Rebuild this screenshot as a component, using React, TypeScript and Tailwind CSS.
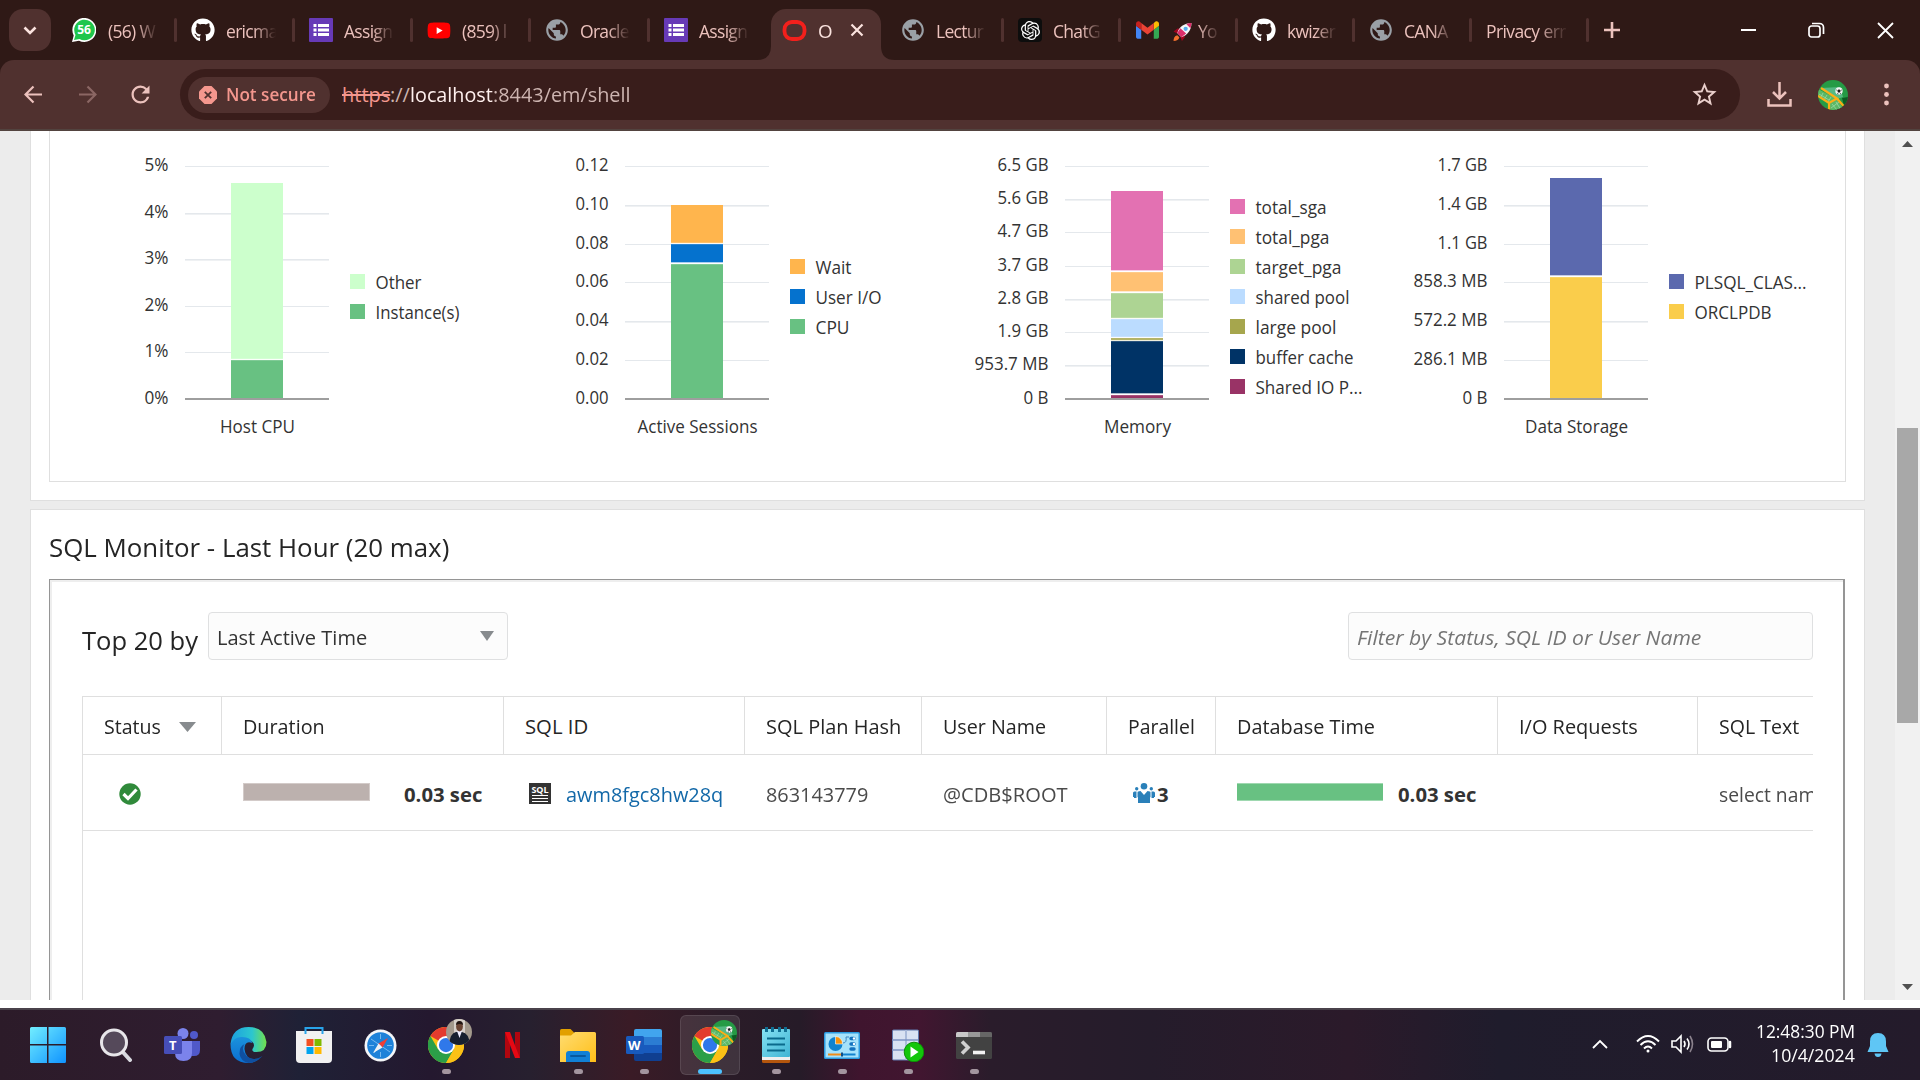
import React, { useLayoutEffect, useRef, useState } from "react";
import { FaGithub, FaYoutube } from "react-icons/fa";
import { SiOpenai } from "react-icons/si";
import { MdPublic, MdStarBorder, MdRefresh } from "react-icons/md";

/** Text condensed horizontally so the run fills a given width. */
function T({ w, className = "", struck = false, children }: { w: number; className?: string; struck?: boolean; children: string }) {
  const ref = useRef<HTMLSpanElement>(null);
  const [sx, setSx] = useState(1);
  useLayoutEffect(() => {
    if (ref.current) setSx(w / ref.current.offsetWidth);
  }, []);
  return (
    <span className={"inline-block shrink-0 whitespace-pre " + className} style={{ width: w }}>
      <span
        ref={ref}
        className={struck ? "inline-block origin-left line-through decoration-2" : "inline-block origin-left"}
        style={{ transform: "scaleX(" + sx + ")" }}
      >
        {children}
      </span>
    </span>
  );
}

/* ---------- browser chrome ---------- */

function FormsIcon() {
  return (
    <svg width="24" height="24" viewBox="0 0 24 24">
      <rect width="24" height="24" rx="1" fill="#673ab7" />
      <g fill="#fff">
        <rect x="4.500" y="6" width="3" height="3" /><rect x="9" y="6" width="11" height="3" />
        <rect x="4.500" y="10.500" width="3" height="3" /><rect x="9" y="10.500" width="11" height="3" />
        <rect x="4.500" y="15" width="3" height="3" /><rect x="9" y="15" width="11" height="3" />
      </g>
    </svg>
  );
}
function WhatsIcon() {
  return (
    <span className="relative -ml-0.5 flex size-6 items-center justify-center">
      <svg className="absolute inset-0" width="24" height="24" viewBox="0 0 24 24">
        <path d="M0 24 1.700 17.500A12 12 0 1 1 7 22.700z" fill="#fff" />
        <path d="M2 22 3.500 17A10.300 10.300 0 1 1 7.500 21z" fill="#1fc64c" />
      </svg>
      <span className="relative text-[12px] font-bold leading-none text-white">56</span>
    </span>
  );
}
function GmailIcon() {
  return (
    <svg width="23" height="18" viewBox="52 42 88 66">
      <path fill="#4285f4" d="M58 108h14V74L52 59v43c0 3.320 2.690 6 6 6" />
      <path fill="#34a853" d="M120 108h14c3.320 0 6-2.690 6-6V59l-20 15" />
      <path fill="#fbbc04" d="M120 48v26l20-15v-8c0-7.420-8.470-11.650-14.400-7.200" />
      <path fill="#ea4335" d="M72 74V48l24 18 24-18v26L96 92" />
      <path fill="#c5221f" d="M52 51v8l20 15V48l-5.600-4.200c-5.940-4.450-14.400-.22-14.400 7.200" />
    </svg>
  );
}
function Rocket() {
  return (
    <svg width="19" height="20" viewBox="0 0 36 36" className="ml-[3px] shrink-0">
      <path d="M1 17l7.500-5.500 8 1L8 21zM17 35l5.500-7-1-8.500L14 28z" fill="#a0041e" />
      <path d="M8 20C11 9 21 1 35 1c0 14-8 23-19 27z" fill="#f2f6f8" />
      <path d="M8 20l6-9 11 10-9 7zM25 3c3-1 7-2 10-2 0 3-1 7-2 10z" fill="#dd2e6b" />
      <circle cx="24" cy="12" r="4" fill="#55acee" />
      <path d="M1 35c0-6 2-10 7-11l4 4c-1 5-5 7-11 7z" fill="#f4702c" />
    </svg>
  );
}
function ProfilePitch({ size }: { size: number }) {
  return (
    <svg width={size} height={size} viewBox="0 0 30 30">
      <defs><clipPath id={"p" + size}><circle cx="15" cy="15" r="15" /></clipPath></defs>
      <g clipPath={"url(#p" + size + ")"}>
        <rect width="30" height="30" fill="#259b45" />
        <path d="M3 8 22 7 25 17 19 19z" fill="#55b983" />
        <path d="M0 9 19 19 11 23 0 16z M19 19 26 30 12 30 11 23z" fill="#5cb866" />
        <path d="M24 18l6-1v11l-4-2z" fill="#0c5b23" />
        <path d="M1 14l10 6M5 13l-2 4M9 15l-3 5M13 17l-3 5M14 24l5 6M18 22l5 8M13 28l8-6" stroke="#a3dcae" strokeWidth=".7" />
        <path d="M3 8 19 18.500 11 23 0 16M11 23v7M19 18.500l7 8" fill="none" stroke="#fbae17" strokeWidth="2.200" />
        <circle cx="21" cy="11" r="3.700" fill="#f1f4f1" />
        <path d="M21 9.200l1.700 1.300-.7 1.900h-2l-.7-1.900zM17.800 9.500l1 .3-.6 1zM24.300 9.500l-1 .3.500 1.200zM19 14l.8-.9.900 1.400zM23.200 13.800l-.8-.8-.6 1.500z" fill="#1c1c1c" />
      </g>
    </svg>
  );
}

type Tab = { w: number; icon: React.ReactNode; text: string; sep?: boolean };
const globe = <MdPublic size={26} color="#9aa0a6" className="shrink-0" />;
const TABS: Tab[] = [
  { w: 118, icon: <WhatsIcon />, text: "(56) W", sep: true },
  { w: 118, icon: <FaGithub size={24} color="#fff" />, text: "ericma", sep: true },
  { w: 118, icon: <FormsIcon />, text: "Assign", sep: true },
  { w: 118, icon: <FaYoutube size={25} color="#f00" className="rounded bg-[radial-gradient(circle,#fff_30%,transparent_31%)]" />, text: "(859) l", sep: true },
  { w: 119, icon: globe, text: "Oracle", sep: true },
  { w: 118, icon: <FormsIcon />, text: "Assign" },
];
const TABS2: Tab[] = [
  { w: 117, icon: globe, text: "Lectur", sep: true },
  { w: 117, icon: <span className="flex size-6 items-center justify-center rounded bg-[#0d0d0d]"><SiOpenai size={19} color="#fff" /></span>, text: "ChatG", sep: true },
  { w: 117, icon: <GmailIcon />, text: "Yo", sep: true },
  { w: 117, icon: <FaGithub size={24} color="#fff" />, text: "kwizer", sep: true },
  { w: 117, icon: globe, text: "CANA", sep: true },
];

function TabItem({ t }: { t: Tab }) {
  return (
    <div className="flex h-[60px] shrink-0 items-center pl-4" style={{ width: t.w }}>
      <span className="flex size-6 shrink-0 items-center justify-center">{t.icon}</span>
      <span className="ml-[11px] flex h-8 w-[51px] items-center gap-1.5 overflow-hidden whitespace-nowrap pt-[3px] text-[17.500px] tracking-[-0.7px] [mask-image:linear-gradient(90deg,#000_55%,transparent_98%)]">
        {t.text === "Yo" && <Rocket />}
        {t.text}
      </span>
      {t.sep && <span className="-mr-[2px] ml-auto h-6 w-[3px] rounded bg-[#50312f]" />}
    </div>
  );
}

function TabStrip() {
  return (
    <div className="flex h-[60px] w-full shrink-0 items-center bg-[#2f1916] text-[#ecc2bd]">
      <div className="ml-[9px] flex size-[42px] shrink-0 items-center justify-center rounded-[14px] bg-[#50312f]">
        <svg width="14" height="9" viewBox="0 0 14 9"><path d="M1.500 1.500 7 7l5.500-5.500" fill="none" stroke="#fbe3df" strokeWidth="2.600" /></svg>
      </div>
      <div className="ml-[6px] flex shrink-0">
        {TABS.map((t, i) => <TabItem key={i} t={t} />)}
      </div>
      <div className="flex h-[60px] w-[119px] shrink-0 items-end">
        <svg width="14" height="14" className="-ml-[9px] shrink-0"><path d="M0 14Q14 14 14 0V14z" fill="#50312f" /></svg>
        <div className="flex h-[51px] w-[110px] shrink-0 items-center rounded-t-[15px] bg-[#50312f] pb-[9px] pl-[11px]">
          <svg width="25" height="25" viewBox="0 0 25 25"><rect x="2.500" y="4" width="20" height="17" rx="7.500" fill="none" stroke="#f3201c" strokeWidth="3.800" /></svg>
          <T w={15} className="ml-[11px] pt-[3px] text-[17.500px] text-[#fbe3df]">O</T>
          <svg width="14" height="14" className="ml-[17px]"><path d="M1.500 1.500l11 11M12.500 1.500l-11 11" stroke="#fbe3df" strokeWidth="2.200" /></svg>
        </div>
        <svg width="14" height="14" className="shrink-0"><path d="M0 0Q0 14 14 14H0z" fill="#50312f" /></svg>
      </div>
      <div className="flex shrink-0">
        {TABS2.map((t, i) => <TabItem key={i} t={t} />)}
      </div>
      <div className="flex w-[117px] shrink-0 items-center">
        <span className="ml-[16px] w-[84px] overflow-hidden whitespace-nowrap pt-[3px] text-[17.500px] tracking-[-0.6px] [mask-image:linear-gradient(90deg,#000_60%,transparent_98%)]">Privacy err</span>
        <span className="-mr-[2px] ml-auto h-6 w-[3px] rounded bg-[#50312f]" />
      </div>
      <svg width="16" height="16" className="ml-[17px]"><path d="M8 0v16M0 8h16" stroke="#ecc2bd" strokeWidth="2.600" /></svg>
      <div className="ml-auto mr-[26px] flex items-center">
        <span className="h-[2px] w-[15px] bg-white" />
        <svg width="17" height="17" className="ml-[52px]" fill="none" stroke="#fff" strokeWidth="1.700">
          <rect x="1" y="4" width="11" height="11" rx="2.500" /><path d="M4 1.500h7.500a4 4 0 0 1 4 4V12" />
        </svg>
        <svg width="17" height="17" className="ml-[52px]"><path d="M1 1l15 15M16 1L1 16" stroke="#fff" strokeWidth="1.800" /></svg>
      </div>
    </div>
  );
}

function Toolbar() {
  return (
    <div className="shrink-0 bg-[#2f1916]">
      <div className="flex h-[71px] items-center rounded-t-[14px] border-b-2 border-[#52433f] bg-[#50312f]">
        <svg width="19" height="19" className="ml-6" fill="none" stroke="#ecc2bd" strokeWidth="2.200"><path d="M18 9.500H2M9.500 1.500l-8 8 8 8" /></svg>
        <svg width="19" height="19" className="ml-[35px]" fill="none" stroke="#8b6764" strokeWidth="2.200"><path d="M1 9.500h16M9.500 1.500l8 8-8 8" /></svg>
        <MdRefresh size={27} color="#ecc2bd" className="ml-[30px]" />
        <div className="ml-[26px] flex h-[51px] w-[1560px] items-center rounded-full bg-[#391d1b] pl-2">
          <div className="flex h-9 w-[142px] items-center rounded-full bg-[#50312f] pl-[11px]">
            <svg width="18" height="18" viewBox="0 0 18 18"><path d="M5.500 0h7L18 5.500v7L12.500 18h-7L0 12.500v-7z" fill="#f4978e" /><path d="M5.800 5.800l6.400 6.400M12.200 5.800l-6.400 6.400" stroke="#50312f" strokeWidth="1.800" /></svg>
            <T w={90} className="ml-[9px] text-[17.500px] font-semibold text-[#f4978e]">Not secure</T>
          </div>
          <span className="ml-[12px] flex text-[20px]">
            <T w={48} struck className="text-[#f4978e]">https</T>
            <T w={20} className="text-[#cdb4b0]">://</T>
            <T w={83} className="text-[#fff0ee]">localhost</T>
            <T w={138} className="text-[#cdb4b0]">:8443/em/shell</T>
          </span>
          <MdStarBorder size={29} color="#e9cfcb" className="ml-auto mr-[21px]" />
        </div>
        <svg width="25" height="25" className="ml-[27px]" fill="none" stroke="#ecc2bd" strokeWidth="2.500"><path d="M12.500 0v16M6 10l6.500 6.500L19 10M1.500 17v6.500h22V17" /></svg>
        <span className="ml-[26px]"><ProfilePitch size={30} /></span>
        <svg width="5" height="26" className="ml-[36px]" fill="#ecc2bd"><circle cx="2.500" cy="4" r="2.400" /><circle cx="2.500" cy="12.500" r="2.400" /><circle cx="2.500" cy="21" r="2.400" /></svg>
      </div>
    </div>
  );
}

/* ---------- charts ---------- */

type ChartData = {
  title: string; tw: number;
  ticks: [string, number][];
  bars: [number, number, string][];
  legend: [string, number, string][];
  legendTop: number;
};

const CHARTS: ChartData[] = [
  {
    title: "Host CPU", tw: 75,
    ticks: [["5%", 24], ["4%", 24], ["3%", 24], ["2%", 24], ["1%", 24], ["0%", 24]],
    bars: [[52, 228, "#ccffcc"], [229, 267, "#68c182"]],
    legend: [["Other", 46, "#ccffcc"], ["Instance(s)", 84, "#68c182"]], legendTop: 143,
  },
  {
    title: "Active Sessions", tw: 120,
    ticks: [["0.12", 33], ["0.10", 33], ["0.08", 33], ["0.06", 33], ["0.04", 33], ["0.02", 33], ["0.00", 33]],
    bars: [[74, 112, "#ffb54d"], [113, 131, "#0572ce"], [133, 267, "#68c182"]],
    legend: [["Wait", 36, "#ffb54d"], ["User I/O", 66, "#0572ce"], ["CPU", 34, "#68c182"]], legendTop: 128,
  },
  {
    title: "Memory", tw: 67,
    ticks: [["6.5 GB", 51], ["5.6 GB", 51], ["4.7 GB", 51], ["3.7 GB", 51], ["2.8 GB", 51], ["1.9 GB", 51], ["953.7 MB", 74], ["0 B", 25]],
    bars: [[60, 139, "#e371b2"], [141, 160, "#ffc173"], [162, 187, "#add493"], [188, 206, "#bbdcff"], [207, 210, "#a6a64d"], [210, 262, "#003366"], [264, 267, "#993366"]],
    legend: [["total_sga", 71, "#e371b2"], ["total_pga", 74, "#ffc173"], ["target_pga", 86, "#add493"], ["shared pool", 94, "#bbdcff"], ["large pool", 81, "#a6a64d"], ["buffer cache", 98, "#003366"], ["Shared IO P...", 107, "#993366"]], legendTop: 68,
  },
  {
    title: "Data Storage", tw: 103,
    ticks: [["1.7 GB", 50], ["1.4 GB", 50], ["1.1 GB", 50], ["858.3 MB", 74], ["572.2 MB", 74], ["286.1 MB", 74], ["0 B", 25]],
    bars: [[47, 144, "#5b69ae"], [146, 267, "#facd4b"]],
    legend: [["PLSQL_CLAS...", 112, "#5b69ae"], ["ORCLPDB", 77, "#facd4b"]], legendTop: 143,
  },
];

function Chart({ c }: { c: ChartData }) {
  const n = c.ticks.length - 1;
  return (
    <svg width="440" height="350" viewBox="0 0 440 350" className="shrink-0 last:-ml-px" fontSize="17.800" fill="#333">
      {c.ticks.map(([label, w], i) => {
        const y = Math.round(35 + (i * 232.500) / n);
        return (
          <g key={i}>
            {i < n && <rect x="135" y={y} width="144" height={y % 2 ? 1 : 1.600} fill="#e4e8ec" />}
            <text x={118.500 - w} y={y + 5} textLength={w} lengthAdjust="spacingAndGlyphs">{label}</text>
          </g>
        );
      })}
      {c.bars.map(([a, b, f], i) => (
        <rect key={i} x="181" y={a} width="52" height={b - a + (i < c.bars.length - 1 ? 0.400 : 0)} fill={f} />
      ))}
      {c.bars.slice(1).map(([a], i) => <rect key={i} x="181" y={a - 1.200} width="52" height="1.400" fill="#fff" opacity=".8" />)}
      <rect x="135" y="267" width="144" height="2" fill="#9e9e9e" />
      <text x={207.500 - c.tw / 2} y="302" textLength={c.tw} lengthAdjust="spacingAndGlyphs">{c.title}</text>
      {c.legend.map(([label, w, f], i) => (
        <g key={label}>
          <rect x="300" y={c.legendTop + i * 30} width="15" height="15" fill={f} />
          <text x="325.500" y={c.legendTop + 15 + i * 30} textLength={w} lengthAdjust="spacingAndGlyphs">{label}</text>
        </g>
      ))}
    </svg>
  );
}

/* ---------- SQL monitor ---------- */

const COLS: { w: number; label: string; tw: number }[] = [
  { w: 139, label: "Status", tw: 57 },
  { w: 282, label: "Duration", tw: 82 },
  { w: 241, label: "SQL ID", tw: 63 },
  { w: 177, label: "SQL Plan Hash", tw: 135 },
  { w: 185, label: "User Name", tw: 103 },
  { w: 109, label: "Parallel", tw: 67 },
  { w: 282, label: "Database Time", tw: 138 },
  { w: 200, label: "I/O Requests", tw: 119 },
  { w: 260, label: "SQL Text", tw: 80 },
];

function Cell({ i, children, className = "" }: { i: number; children?: React.ReactNode; className?: string }) {
  return <div className={"flex h-full shrink-0 items-center pl-[21px] " + className} style={{ width: COLS[i].w }}>{children}</div>;
}

function SqlTable() {
  return (
    <div className="h-[400px] w-[1731px] overflow-hidden border-l border-t border-[#dfdfdf] text-[20.300px]">
      <div className="flex h-[58px] w-[1900px] border-b border-[#dfdfdf] text-[#252525]">
        {COLS.map((c, i) => (
          <Cell key={c.label} i={i} className={i < 8 ? "border-r border-[#dfdfdf] pt-[2px]" : "pt-[2px]"}>
            <T w={c.tw}>{c.label}</T>
            {i === 0 && <svg width="17" height="10" className="ml-[18px]"><path d="M0 0h17L8.500 10z" fill="#878b8e" /></svg>}
          </Cell>
        ))}
      </div>
      <div className="flex h-[76px] w-[1900px] items-center border-b border-[#dfdfdf] text-[#4a4a4a]">
        <Cell i={0}>
          <svg width="22" height="22" viewBox="0 0 22 22" className="ml-[15px] mt-[3px]"><circle cx="11" cy="11" r="10.700" fill="#308a3b" /><path d="M4.500 11l4.500 4.500 8.500-9" fill="none" stroke="#fff" strokeWidth="3.200" /></svg>
        </Cell>
        <Cell i={1}>
          <span className="-mt-px h-[18px] w-[127px] border border-[#d3cbc9] bg-[#bcb1ae]" />
          <T w={78} className="ml-[34px] mt-[3px] font-bold text-[#333]">0.03 sec</T>
        </Cell>
        <Cell i={2}>
          <span className="ml-1 mt-px flex h-[21px] w-[22px] flex-col items-center gap-[2px] bg-[#333] pt-[3px]">
            <span className="text-[9px] font-bold leading-[7px] text-white">SQL</span>
            <span className="h-px w-4 bg-white" /><span className="h-px w-4 bg-white" /><span className="h-px w-4 bg-white" />
          </span>
          <T w={157} className="ml-[15px] mt-[3px] text-[#1268a8]">awm8fgc8hw28q</T>
        </Cell>
        <Cell i={3}><T w={102} className="mt-[3px]">863143779</T></Cell>
        <Cell i={4}><T w={125} className="mt-[3px]">@CDB$ROOT</T></Cell>
        <Cell i={5}>
          <svg width="22" height="22" viewBox="0 0 22 20" className="ml-[5px]" fill="#2a80b9">
            <circle cx="11" cy="3.300" r="3.300" /><circle cx="3.700" cy="5.800" r="1.700" /><circle cx="18.300" cy="5.800" r="1.700" />
            <path d="M4.500 9.500q0-1.500 3-1.500l3.500 4 3.500-4q3 0 3 1.500v4.500l-.5.500V20h-12v-5.500l-.5-.5z" />
            <path d="M0 14V10q0-1.500 1.500-1.500H3.500V15H1V14zM22 14V10q0-1.500-1.500-1.500H18.500V15h2.500V14z" />
          </svg>
          <T w={12} className="ml-[2px] mt-[3px] font-bold text-[#333]">3</T>
        </Cell>
        <Cell i={6}>
          <span className="-mt-px h-[18px] w-[146px] border-y border-[#9fd8b0] bg-[#68c182]" />
          <T w={78} className="ml-[15px] mt-[3px] font-bold text-[#333]">0.03 sec</T>
        </Cell>
        <Cell i={7} />
        <Cell i={8}><T w={97} className="mt-[3px]">select nam</T></Cell>
      </div>
    </div>
  );
}

function Page() {
  return (
    <div className="flex h-[869px] shrink-0 overflow-hidden bg-[#ececec]">
      <div className="w-[30px] shrink-0" />
      <div className="flex w-[1835px] shrink-0 flex-col">
        <div className="h-[370px] shrink-0 border border-t-0 border-[#dfdfdf] bg-white px-[18px]">
          <div className="flex h-[351px] w-[1797px] overflow-hidden border border-t-0 border-[#dfdfdf]">
            {CHARTS.map((c) => <Chart key={c.title} c={c} />)}
          </div>
        </div>
        <div className="mt-2 h-[491px] shrink-0 overflow-hidden border border-b-0 border-[#dfdfdf] bg-white px-[18px]">
          <div className="flex h-[69px] items-center pt-[5px] text-[26px] text-[#252525]">
            <T w={400}>SQL Monitor - Last Hour (20 max)</T>
          </div>
          <div className="h-[440px] w-[1796px] border-l border-r-2 border-t border-[#959595]">
            <div className="h-full border-l-2 border-t-2 border-[#eee] px-[30px]">
              <div className="flex items-center pt-[30px]">
                <T w={116} className="mt-[8px] text-[26px] text-[#252525]">Top 20 by</T>
                <div className="ml-[10px] flex h-12 w-[300px] items-center justify-between rounded-sm border border-[#dfe0e1] bg-[#fcfcfc] pl-[8px] pr-[13px] text-[20.300px] text-[#333]">
                  <T w={150} className="mt-[2px]">Last Active Time</T>
                  <svg width="14" height="10"><path d="M0 0h14L7 10z" fill="#878b8e" /></svg>
                </div>
                <div className="ml-auto flex h-12 w-[465px] items-center rounded-sm border border-[#dfe0e1] bg-[#fcfcfc] pl-[8px] text-[20.300px] italic text-[#757575]">
                  <T w={344} className="mt-[2px]">Filter by Status, SQL ID or User Name</T>
                </div>
              </div>
              <div className="mt-9"><SqlTable /></div>
            </div>
          </div>
        </div>
      </div>
      <div className="ml-auto flex w-[25px] flex-col items-center bg-[#f1f1f1]">
        <svg width="11" height="6" className="mt-[10px]"><path d="M0 6h11L5.500 0z" fill="#505050" /></svg>
        <div className="mt-[281px] h-[295px] w-[21px] bg-[#a8a8a8]" />
        <svg width="11" height="6" className="mt-[261px]"><path d="M0 0h11L5.500 6z" fill="#505050" /></svg>
      </div>
    </div>
  );
}

/* ---------- taskbar ---------- */

function ChromeLogo() {
  return (
    <svg width="36" height="36" viewBox="0 0 48 48">
      <circle cx="24" cy="24" r="24" fill="#fbc116" />
      <path d="M24 24 3.200 12A24 24 0 0 1 44.800 12H24z" fill="#e33b2e" />
      <path d="M3.200 12A24 24 0 0 0 24 48L34.400 30 24 24 13.600 30z" fill="#2b9f48" />
      <path d="M24 12H44.800A24 24 0 0 1 24 48L34.400 30z" fill="#fbc116" />
      <circle cx="24" cy="24" r="12" fill="#fff" />
      <circle cx="24" cy="24" r="9.500" fill="#2f78ea" />
    </svg>
  );
}
function PersonAvatar() {
  return (
    <svg width="26" height="26" viewBox="0 0 26 26">
      <defs><clipPath id="av"><circle cx="13" cy="13" r="13" /></clipPath></defs>
      <g clipPath="url(#av)">
        <rect width="26" height="26" fill="#a39a8d" /><rect x="8" width="11" height="14" fill="#d6d0c9" />
        <path d="M3 26q1-12 7-13h6q7 1 8 13z" fill="#17202f" />
        <path d="M11 12h5l-2.500 7z" fill="#eef" />
        <ellipse cx="13.500" cy="7.500" rx="3.400" ry="5" fill="#6b4635" /><path d="M10 6q0-4 3.500-4T17 6q-3-2-7 0z" fill="#201512" />
      </g>
    </svg>
  );
}

const APPS: { icon: React.ReactNode; dot?: boolean; active?: boolean; badge?: React.ReactNode }[] = [
  { icon: <svg className="mr-[4px]" width="36" height="36" viewBox="0 0 36 36"><defs><linearGradient id="wn" x1="0" y1="0" x2="1" y2="1"><stop stopColor="#72eeff" /><stop offset="1" stopColor="#0f93ff" /></linearGradient></defs><path d="M1.500 0H17v17H0V1.500Q0 0 1.500 0zM18.500 0h16Q36 0 36 1.500V17H18.500zM0 18.500h17V36H1.500Q0 36 0 34.500zM18.500 18.500H36v16q0 1.500-1.500 1.500h-16z" fill="url(#wn)" /></svg> },
  { icon: <svg width="34" height="34" viewBox="0 0 34 34"><path d="M22 22l9 10" stroke="#d8d8df" strokeWidth="4" strokeLinecap="round" /><circle cx="15" cy="14.500" r="12.500" fill="#55495a" stroke="#e8e6ea" strokeWidth="3" /></svg> },
  { icon: <span className="relative flex size-9"><svg width="36" height="36" viewBox="0 -1 36 36"><circle cx="19" cy="5.500" r="5.500" fill="#7b83eb" /><circle cx="30" cy="7" r="4" fill="#5059c9" /><path d="M26 13h10v9q0 6-6 6h-4z" fill="#5059c9" /><path d="M11 13h17v12q0 8-8.500 8T11 25z" fill="#7b83eb" /><rect y="8" width="18" height="18" rx="1.500" fill="#464eb8" /></svg><span className="absolute left-[5px] top-[10px] text-[13px] font-bold leading-4 text-white">T</span></span> },
  { icon: <svg width="37" height="36" viewBox="0 0 36 36"><defs><linearGradient id="e1" x1="0" x2="1"><stop stopColor="#1c9fe0" /><stop offset=".6" stopColor="#2cc6cf" /><stop offset="1" stopColor="#72e04c" /></linearGradient><linearGradient id="e2" x1="0" x2="0" y1="0" y2="1"><stop stopColor="#1b92dc" /><stop offset="1" stopColor="#0b6fd2" /></linearGradient></defs><path d="M0 17Q2 0 18 0T36 15Q36 25 26 25q-5 0-4-3 3-4 0-7-8-8-22 2z" fill="url(#e1)" /><path d="M0 17q5-8 12-7 8 0 10 6-8-3-8 6 1 12 14 10Q24 36 18 36 0 36 0 17z" fill="url(#e2)" /><path d="M14 17q-4 6 2 12 7 6 16 0Q26 36 18 36q-8-2-9-9 0-8 5-10z" fill="#0f4fa0" /></svg> },
  { icon: <svg width="36" height="36" viewBox="0 0 36 36"><path d="M9.500 6V1h17v5" fill="none" stroke="#28a4ea" strokeWidth="2" /><path d="M0 4h36v28q0 4-4 4H4q-4 0-4-4z" fill="#f1f1f1" /><path d="M9.500 7V4M26.500 7V4" stroke="#28a4ea" strokeWidth="2" /><path d="M10.500 12h7v7h-7z" fill="#f25022" /><path d="M18.500 12h7v7h-7z" fill="#7fba00" /><path d="M10.500 20h7v7h-7z" fill="#00a4ef" /><path d="M18.500 20h7v7h-7z" fill="#ffb900" /></svg> },
  { icon: <svg width="33" height="33" viewBox="0 0 33 33"><circle cx="16.500" cy="16.500" r="16" fill="#f4f6f8" /><circle cx="16.500" cy="16.500" r="13.300" fill="#1d82d9" /><path d="M7 10l19 13M10 24l4-5M16.500 5v5M16.500 23v5M5 16.500h5M23 16.500h5" stroke="#7fc0f3" strokeWidth=".9" /><path d="M24 9l-5.500 9.500-4-4z" fill="#f03e35" /><path d="M9 24l5.500-9.500 4 4z" fill="#eef2f6" /></svg> },
  { icon: <ChromeLogo />, dot: true, badge: <PersonAvatar /> },
  { icon: <svg width="15" height="26" viewBox="0 0 15 26"><path d="M0 0h5v26l-5 .5zM10 0h5v26.500l-5-.5z" fill="#b1060f" /><path d="M0 0h5l10 26.500-5-.5z" fill="#e50914" /></svg> },
  { icon: <svg width="36" height="33" viewBox="0 0 36 33"><path d="M0 1.500Q0 0 1.500 0h9l4 4v5H0z" fill="#e2a000" /><defs><linearGradient id="ex" x1="0" x2="1" y1="0" y2="1"><stop stopColor="#ffdc71" /><stop offset="1" stopColor="#ffbf18" /></linearGradient></defs><path d="M0 6.500h11l4-3.500h19.500Q36 3 36 4.500V33H0z" fill="url(#ex)" /><path d="M6 33v-8q0-3 3-3h18q3 0 3 3v8z" fill="#1180d6" /><path d="M11 27h14" stroke="#08599f" strokeWidth="2" strokeLinecap="round" /></svg>, dot: true },
  { icon: <span className="relative flex h-8 w-9"><svg width="36" height="32" viewBox="0 0 36 32"><path d="M8 2q0-2 2-2h24q2 0 2 2v6H8z" fill="#41a5ee" /><path d="M8 8h28v8H8z" fill="#2b7cd3" /><path d="M8 16h28v8H8z" fill="#185abd" /><path d="M8 24h28v6q0 2-2 2H10q-2 0-2-2z" fill="#103f91" /><rect y="7" width="18" height="18" rx="1.500" fill="#185abd" /></svg><span className="absolute left-[2px] top-[8px] text-[13px] font-bold leading-4 text-white">W</span></span>, dot: true },
  { icon: <ChromeLogo />, active: true, badge: <ProfilePitch size={26} /> },
  { icon: <svg width="28" height="36" viewBox="0 0 28 36"><defs><linearGradient id="np" x1="0" y1="0" x2="1" y2="1"><stop stopColor="#86e2f2" /><stop offset="1" stopColor="#3fb4d4" /></linearGradient></defs><rect y="28" width="28" height="8" rx="1.500" fill="#b4560d" /><rect y="24" width="28" height="9" fill="#eee" /><rect y="2" width="28" height="28" rx="1" fill="url(#np)" /><path d="M5 11.500h18M5 17.500h18M5 23.500h18" stroke="#0a6a8c" strokeWidth="2" /><path d="M4.500 0v5M10.500 0v5M17.500 0v5M23.500 0v5" stroke="#0f6f93" strokeWidth="3" /></svg>, dot: true },
  { icon: <svg width="36" height="27" viewBox="0 0 36 27"><rect width="36" height="27" rx="1.500" fill="#2b9be0" /><rect x="1.500" y="1.500" width="33" height="24" fill="#a5e2fb" /><circle cx="11.500" cy="12" r="7" fill="#1183cf" /><path d="M11.500 12V4.500a7 7 0 0 1 7 7.500z" fill="#f7930d" stroke="#fff" strokeWidth=".6" /><path d="M19 11q4 0 3-6h3" fill="none" stroke="#3a85bf" /><path d="M27 6.500h3M27 12h3M27 17h3" stroke="#1573bf" strokeWidth="3.400" strokeLinecap="round" /><circle cx="30" cy="6.500" r="1.200" fill="#fff" /><circle cx="30" cy="12" r="1.200" fill="#fff" /><path d="M4 22.500h14" stroke="#f08b16" strokeWidth="2" /><path d="M18 22.500h13.500" stroke="#1183cf" strokeWidth="2" /><path d="M18 20.500v4" stroke="#0b4f8a" strokeWidth="2" /></svg>, dot: true },
  { icon: <svg width="32" height="33" viewBox="0 0 32 33"><rect x=".5" y="1" width="26" height="30" rx="1" fill="#d9e2f3" stroke="#6079ad" /><path d="M14 1v30" stroke="#a9bada" strokeWidth="2" /><path d="M0 11h26M0 21h26" stroke="#7d94c4" strokeWidth="1.500" /><circle cx="22" cy="23" r="9.800" fill="#13c60b" stroke="#0c9106" /><path d="M18.500 17.500v11l8-5.500z" fill="#fff" /></svg>, dot: true },
  { icon: <svg width="36" height="27" viewBox="0 0 36 27"><rect width="36" height="27" rx="1.500" fill="#424242" /><path d="M1.500 0H12v5H0V1.500Q0 0 1.500 0z" fill="#c9c9c9" /><path d="M12 0h12v5H12z" fill="#999" /><path d="M24 0h10.500Q36 0 36 1.500V5H24z" fill="#666" /><path d="M6 9.500l6 6-6 6" fill="none" stroke="#d0d0d0" strokeWidth="3.600" /><path d="M17 20.500h12" stroke="#f2f2f2" strokeWidth="3.600" /></svg>, dot: true },
];

function Taskbar() {
  return (
    <div className="flex h-[72px] shrink-0 items-center border-t-2 border-[#4a424b] bg-[linear-gradient(90deg,#2c1b29_0px,#2f1d30_220px,#1f2136_300px,#24182f_430px,#27202f_530px,#3a1b26_630px,#2b1c28_720px,#261b28_800px,#3f152e_860px,#411630_920px,#2a1c2b_990px,#251c2b_1150px,#2b1a2a_1350px,#1f1c2c_1500px,#241b2b_1920px)]">
      <div className="ml-[17px] flex h-full">
        {APPS.map((a, i) => (
          <div key={i} className="flex w-[66px] items-center justify-center">
            <div className={a.active ? "relative flex h-[60px] w-[60px] items-center justify-center rounded-md border border-white/10 bg-white/10" : "relative flex h-[60px] w-[60px] items-center justify-center"}>
              {a.icon}
              {a.badge && <span className="absolute left-[30px] top-[4px]">{a.badge}</span>}
              {a.dot && <span className="absolute bottom-[1px] h-[5px] w-[9px] rounded-full bg-[#a3959f]" />}
              {a.active && <span className="absolute bottom-0 h-[5px] w-6 rounded-full bg-[#4cc2ff]" />}
            </div>
          </div>
        ))}
      </div>
      <div className="ml-auto flex items-center text-white">
        <svg width="16" height="10" className="-mt-[2px]" fill="none" stroke="#fff" strokeWidth="1.800"><path d="M1 9l7-7 7 7" /></svg>
        <svg width="24" height="20" viewBox="0 0 24 20" className="-mt-[2px] ml-[28px]" fill="none" stroke="#fff" strokeWidth="1.900"><path d="M1 7.500q11-11 22 0M4.500 11q7.500-7.500 15 0M8 14.500q4-4 8 0" /><circle cx="12" cy="17" r="1.500" fill="#fff" stroke="none" /></svg>
        <svg width="23" height="20" viewBox="0 0 23 20" className="-mt-[2px] ml-[11px]" fill="none" stroke="#fff" strokeWidth="1.600"><path d="M1 7h4l5-5v16l-5-5H1zM13 7q2 3 0 6M16 4.500q4 5.500 0 11" /><path d="M19 2q5 8 0 16" stroke="#8a818c" /></svg>
        <svg width="25" height="16" viewBox="0 0 25 16" className="ml-[13px]"><rect x="1" y="1" width="20" height="13" rx="3.500" fill="none" stroke="#fff" strokeWidth="1.600" /><rect x="4" y="4" width="11" height="7" rx="1" fill="#fff" /><path d="M23 5v5" stroke="#fff" strokeWidth="2.500" strokeLinecap="round" /></svg>
        <div className="-mt-[4px] ml-[23px] flex w-[100px] flex-col items-end text-[17.500px] leading-6">
          <T w={99}>12:48:30 PM</T>
          <T w={84}>10/4/2024</T>
        </div>
        <svg width="22" height="24" viewBox="0 0 22 24" className="ml-[12px] mr-[31px]" fill="#5fc6f5"><path d="M11 0q8 0 8 8.500V13l2.500 6H.5L3 13V8.500Q3 0 11 0zM7.500 20.500h7q-.5 3.500-3.500 3.500t-3.500-3.500z" /></svg>
      </div>
    </div>
  );
}

export default function App() {
  return (
    <div className="flex h-[1080px] w-[1920px] flex-col overflow-hidden bg-white font-['Open_Sans','Noto_Sans',sans-serif]">
      <TabStrip />
      <Toolbar />
      <Page />
      <div className="h-2 shrink-0 bg-white" />
      <Taskbar />
    </div>
  );
}
